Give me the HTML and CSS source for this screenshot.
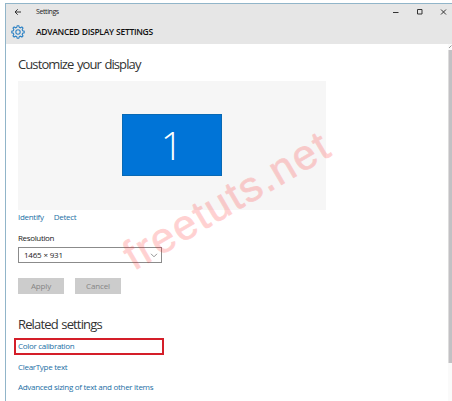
FILE: index.html
```html
<!DOCTYPE html>
<html lang="en">
<head>
<meta charset="utf-8">
<title>Settings</title>
<link rel="stylesheet" href="styles.css">
</head>
<body>
<div class="window">
  <header class="header">
    <div class="titlebar">
      <svg class="back" width="8" height="8" viewBox="0 0 8 8"><path d="M7 4H1M3.700 1.300 1 4l2.700 2.700"/></svg>
      <span class="app">Settings</span>
      <svg class="controls" width="54" height="8" viewBox="0 0 54 8"><path d="M0 4.500h5.500M24.500 1.500h4.500v4.500h-4.500zM48 1.500l5 5M53 1.500l-5 5"/></svg>
    </div>
    <div class="heading">
      <svg class="gear" width="14" height="14" viewBox="0 0 14 14"><path d="M5.700 2.300 6.200 .8h1.600l.5 1.500 1.100.5 1.500-.8 1.100 1.100-.8 1.500.5 1.100 1.500.5v1.600l-1.500.5-.5 1.100.8 1.500-1.100 1.100-1.500-.8-1.100.5-.5 1.500H6.200l-.5-1.500-1.100-.5-1.500.8L2 10.900l.8-1.500-.5-1.100-1.500-.5V6.200l1.500-.5.500-1.100L2 3.100 3.100 2l1.500.8z"/><circle cx="7" cy="7" r="2.200"/></svg>
      <h1>ADVANCED DISPLAY SETTINGS</h1>
    </div>
  </header>
  <div class="body">
    <main>
      <h2>Customize your display</h2>
      <div class="preview"><div class="monitor">1</div></div>
      <div class="links"><a>Identify</a><a>Detect</a></div>
      <div class="label">Resolution</div>
      <div class="select"><span>1465 × 931</span><svg width="8" height="5" viewBox="0 0 8 5"><path d="M1 .8 4 3.800 7 .8"/></svg></div>
      <div class="buttons"><div class="button">Apply</div><div class="button">Cancel</div></div>
      <h2 class="related">Related settings</h2>
      <a class="boxed">Color calibration</a>
      <a class="link cleartype">ClearType text</a>
      <a class="link">Advanced sizing of text and other items</a>
    </main>
    <div class="scrollbar"><svg width="4" height="6" viewBox="0 0 4 6"><path d="M1 4l2.500-2.500"/></svg><div class="thumb"></div></div>
  </div>
</div>
<svg class="watermark" width="452" height="401" viewBox="0 0 452 401"><g transform="translate(134 271) rotate(-30.300)"><text x="0" y="0" textLength="230" lengthAdjust="spacing">freetuts.net</text></g></svg>
</body>
</html>
```
FILE: styles.css
```css
* { box-sizing: border-box; }
body {
  margin: 0;
  width: 452px;
  height: 401px;
  overflow: hidden;
  background: #fff;
  color: #222;
  font: 8px/12px "Open Sans", "Noto Sans", sans-serif;
  font-stretch: 90%;
}
h1, h2 { margin: 0; }
svg { display: block; fill: none; }
.window {
  margin: 3px 0 0 5px;
  height: 398px;
  border: solid #91b5c9;
  border-width: 1px 0 0 1px;
  display: flex;
  flex-direction: column;
}
.header { height: 40px; background: #e6e6e6; flex: none; }
.titlebar { height: 15px; display: flex; align-items: center; padding: 0 5px 0 8px; }
.back, .controls { stroke: #333; stroke-width: 1; }
.app { margin-left: 14px; font-size: 7px; letter-spacing: -.4px; }
.controls { margin-left: auto; }
.heading { height: 25px; display: flex; align-items: center; padding: 1px 0 0 5px; }
.gear { stroke: #2f83c5; stroke-width: 1.1; }
h1 { margin-left: 11px; font-size: 8.500px; font-weight: 600; letter-spacing: -.57px; word-spacing: .5px; letter-spacing: -.3px; color: #111; }
.body { flex: 1; display: flex; justify-content: space-between; }
main { padding: 10px 0 0 12px; width: 400px; display: flex; flex-direction: column; }
h2 { height: 27px; font-size: 13px; line-height: 20px; font-weight: 400; color: #333; letter-spacing: -.9px; word-spacing: 1px; }
.preview { width: 308px; height: 129px; background: #f6f6f6; display: flex; padding: 33px 0 0 104px; }
.monitor { width: 100px; height: 62px; background: #0074d7; border: 1px solid #0869b4; color: #fff; font-size: 39px; font-weight: 300; line-height: 59px; text-align: center; }
a { color: #1b6fa5; letter-spacing: -.3px; }
.links { height: 21px; display: flex; gap: 10px; padding-top: 1px; }
.label { height: 16px; padding-top: 1px; letter-spacing: -.35px; }
.select { width: 144px; height: 16px; border: 1px solid #8b8b8b; display: flex; align-items: center; justify-content: space-between; padding: 0 3px 0 5px; letter-spacing: -.2px; }
.select svg { stroke: #888; stroke-width: .9; }
.buttons { display: flex; gap: 11px; margin-top: 15px; }
.button { width: 46px; height: 16px; line-height: 16px; text-align: center; background: #ccc; color: #858585; letter-spacing: -.15px; }
.related { margin-top: 20px; height: 24px; letter-spacing: -.85px; }
.boxed { width: 150px; height: 17px; margin-left: -4px; border: 2px solid #d41e29; padding-left: 2px; line-height: 12px; }
.link { height: 20.500px; line-height: 12px; }
.cleartype { margin-top: 5.500px; }
.scrollbar { width: 4px; background: #fafafa; }
.scrollbar svg { stroke: #999; }
.thumb { height: 313px; background: #c2c1c4; border-left: 1px solid #ddd; }
.watermark { position: absolute; left: 0; top: 0; opacity: .2; pointer-events: none; }
.watermark text { font: 42px "Liberation Sans", sans-serif; fill: #ff1d1d; stroke: #ff1d1d; stroke-width: .8; stroke-linejoin: round; }
```
